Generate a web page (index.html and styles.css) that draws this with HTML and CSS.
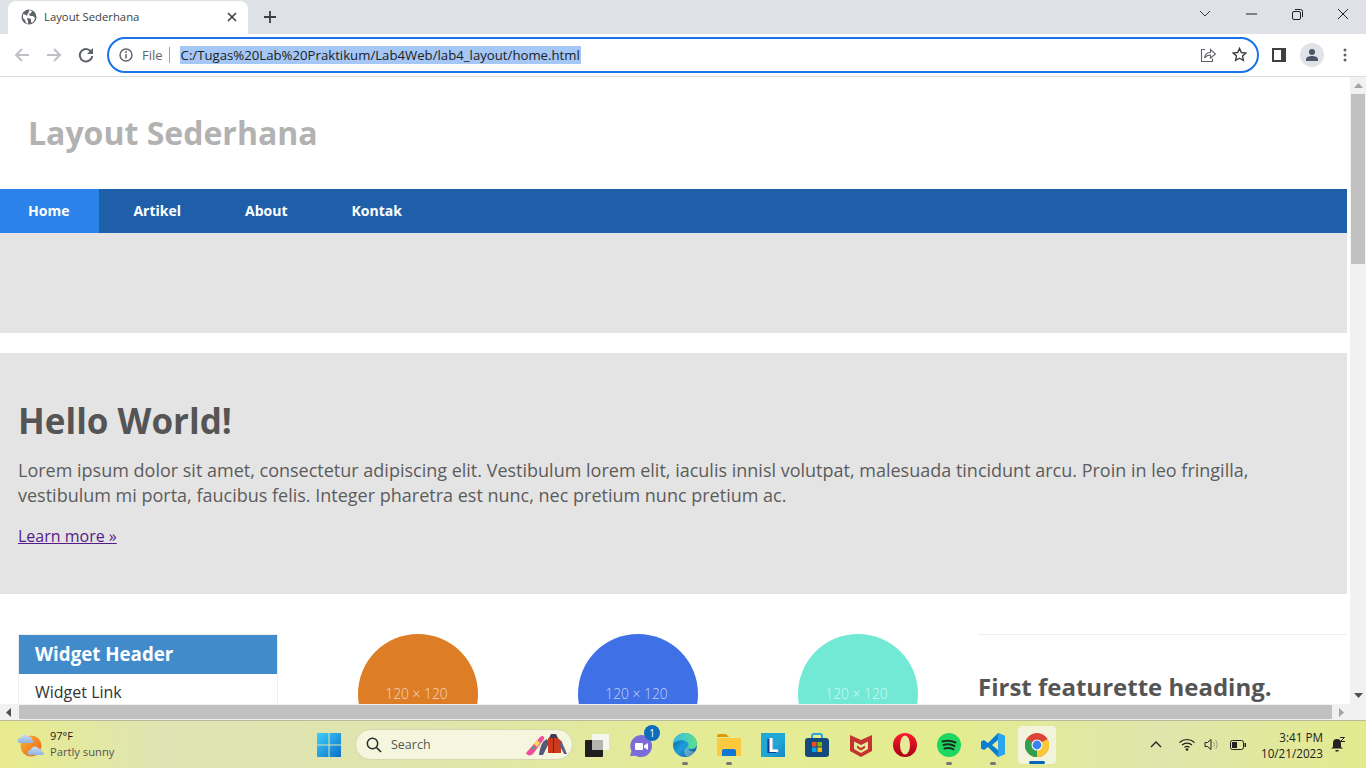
FILE: index.html
```html
<!DOCTYPE html>
<html lang="id">
<head>
<meta charset="utf-8">
<title>Layout Sederhana</title>
<link rel="stylesheet" href="styles.css">
</head>
<body>
<div class="tabstrip">
  <div class="tab">
    <svg class="favicon" width="16" height="16" viewBox="0 0 16 16"><circle cx="8" cy="8" r="7.500" fill="#5f6368"/><path d="M2 5l3 1 2 2-1 2 1 2v3l-2-1-1-3-2-2zM8 1l3 1-1 2-2 1 1 2 3 0 2 2-1 3-2 2-1-1 0-3-3-1-1-2 1-3 1-1z" fill="#fff"/></svg>
    <span class="tab-title">Layout Sederhana</span>
    <svg class="tab-close" width="10" height="10" viewBox="0 0 10 10"><path d="M1 1l8 8M9 1l-8 8" stroke="#3c4043" stroke-width="1.600"/></svg>
  </div>
  <svg class="newtab" width="14" height="14" viewBox="0 0 14 14"><path d="M7 1v12M1 7h12" stroke="#3c4043" stroke-width="1.800"/></svg>
  <div class="winctl">
    <span class="winbtn"><svg width="12" height="8" viewBox="0 0 12 8"><path d="M1 1l5 5 5-5" fill="none" stroke="#3c4043" stroke-width="1"/></svg></span>
    <span class="winbtn"><svg width="11" height="2" viewBox="0 0 11 2"><path d="M0 1h11" stroke="#202124" stroke-width="1"/></svg></span>
    <span class="winbtn"><svg width="11" height="11" viewBox="0 0 11 11"><rect x="0.500" y="2.500" width="8" height="8" rx="1.500" fill="none" stroke="#202124"/><path d="M3 .5h5.500a2 2 0 0 1 2 2V8" fill="none" stroke="#202124"/></svg></span>
    <span class="winbtn"><svg width="12" height="12" viewBox="0 0 12 12"><path d="M1 1l10 10M11 1L1 11" stroke="#202124" stroke-width="1"/></svg></span>
  </div>
</div>
<div class="toolbar">
  <span class="navbtn"><svg width="16" height="16" viewBox="0 0 16 16"><path d="M15 8H2M8 2L2 8l6 6" fill="none" stroke="#bdc1c6" stroke-width="2"/></svg></span>
  <span class="navbtn"><svg width="16" height="16" viewBox="0 0 16 16"><path d="M1 8h13M8 2l6 6-6 6" fill="none" stroke="#bdc1c6" stroke-width="2"/></svg></span>
  <span class="navbtn"><svg width="16" height="16" viewBox="0 0 16 16"><path d="M13.600 5.500A6.200 6.200 0 1 0 14.200 9" fill="none" stroke="#5f6368" stroke-width="2"/><path d="M15 1v6H9z" fill="#5f6368"/></svg></span>
  <div class="omnibox">
    <svg class="info" width="14" height="14" viewBox="0 0 14 14"><circle cx="7" cy="7" r="6" fill="none" stroke="#5f6368" stroke-width="1.400"/><path d="M7 6v4.500" stroke="#5f6368" stroke-width="1.500"/><circle cx="7" cy="4" r="1" fill="#5f6368"/></svg>
    <span class="scheme">File</span>
    <span class="divider"></span>
    <span class="url">C:/Tugas%20Lab%20Praktikum/Lab4Web/lab4_layout/home.html</span>
    <span class="omni-spacer"></span>
    <svg class="share" width="16" height="16" viewBox="0 0 16 16"><path d="M5 2.500H1.500v12h11V11.500" fill="none" stroke="#5f6368" stroke-width="1.100"/><path d="M4.500 11c.5-3.500 3-5.500 6-5.500V2.500l5 4.500-5 4V8c-2.500 0-4.500 1-6 3z" fill="none" stroke="#5f6368" stroke-width="1.100"/></svg>
    <svg class="star" width="15" height="15" viewBox="0 0 16 16"><path d="M8 1.500l2 4.400 4.800.5-3.600 3.200 1 4.700L8 12l-4.200 2.300 1-4.700L1.200 6.400 6 5.900z" fill="none" stroke="#3c4043" stroke-width="1.500"/></svg>
  </div>
  <svg class="panel" width="14" height="14" viewBox="0 0 14 14"><rect width="14" height="14" fill="#3c4043"/><rect x="2" y="2" width="7" height="10" fill="#fff"/></svg>
  <span class="avatar"><svg width="14" height="14" viewBox="0 0 14 14"><circle cx="7" cy="4" r="3" fill="#4a5568"/><path d="M1 13v-1.500c0-2.500 3-3.500 6-3.500s6 1 6 3.500V13z" fill="#4a5568"/></svg></span>
  <svg class="kebab" width="4" height="14" viewBox="0 0 4 14"><circle cx="2" cy="2" r="1.500" fill="#5f6368"/><circle cx="2" cy="7" r="1.500" fill="#5f6368"/><circle cx="2" cy="12" r="1.500" fill="#5f6368"/></svg>
</div>

<div class="viewport">
  <div class="page">
    <div class="page-inner">
      <header class="site-head"><h1 class="site-title">Layout Sederhana</h1></header>
      <nav class="site-nav">
        <a class="nav-item nav-active">Home</a>
        <a class="nav-item">Artikel</a>
        <a class="nav-item">About</a>
        <a class="nav-item">Kontak</a>
      </nav>
      <div class="banner"></div>
      <section class="hero">
        <h2 class="hero-title">Hello World!</h2>
        <p class="hero-text">Lorem ipsum dolor sit amet, consectetur adipiscing elit. Vestibulum lorem elit, iaculis innisl volutpat, malesuada tincidunt arcu. Proin in leo fringilla, vestibulum mi porta, faucibus felis. Integer pharetra est nunc, nec pretium nunc pretium ac.</p>
        <a class="hero-link">Learn more »</a>
      </section>
      <div class="content">
        <aside class="widget">
          <div class="widget-head">Widget Header</div>
          <div class="widget-link">Widget Link</div>
        </aside>
        <div class="thumb-col"><div class="thumb thumb-orange">120 × 120</div></div>
        <div class="thumb-col"><div class="thumb thumb-blue">120 × 120</div></div>
        <div class="thumb-col"><div class="thumb thumb-teal">120 × 120</div></div>
        <div class="feature"><h3 class="feature-title">First featurette heading.</h3></div>
      </div>
    </div>
  </div>
  <div class="vscroll">
    <svg class="sb-arrow" width="9" height="5" viewBox="0 0 9 5"><path d="M4.500 0L9 5H0z" fill="#a3a3a3"/></svg>
    <div class="vthumb"></div>
    <svg class="sb-arrow sb-end" width="9" height="5" viewBox="0 0 9 5"><path d="M0 0h9L4.500 5z" fill="#505050"/></svg>
  </div>
  <div class="hscroll">
    <svg class="sb-arrow-h" width="5" height="9" viewBox="0 0 5 9"><path d="M5 0v9L0 4.500z" fill="#505050"/></svg>
    <div class="hthumb"></div>
    <svg class="sb-arrow-h" width="5" height="9" viewBox="0 0 5 9"><path d="M0 0v9l5-4.500z" fill="#a3a3a3"/></svg>
  </div>
  <div class="corner"></div>
</div>

<footer class="taskbar">
  <div class="weather">
    <svg width="26" height="26" viewBox="0 0 26 26"><defs><linearGradient id="sun" x1="0" y1="0" x2="1" y2="1"><stop offset="0" stop-color="#f9b233"/><stop offset="1" stop-color="#e8631a"/></linearGradient><linearGradient id="cloud" x1="0" y1="0" x2="0" y2="1"><stop offset="0" stop-color="#c9dcf3"/><stop offset="1" stop-color="#8fb2de"/></linearGradient></defs><circle cx="13" cy="14" r="10.500" fill="url(#sun)"/><path d="M2 11a2.500 2.500 0 0 1 .5-5 4.500 4.500 0 0 1 8-1.500A3 3 0 0 1 14 8a1.500 1.500 0 0 1 0 3z" fill="url(#cloud)"/><path d="M12 23a2.500 2.500 0 0 1 .5-5 4.500 4.500 0 0 1 8-1.500A3 3 0 0 1 24 20a1.500 1.500 0 0 1 .5 3z" fill="url(#cloud)"/></svg>
    <div class="weather-text"><span class="temp">97°F</span><span class="cond">Partly sunny</span></div>
  </div>
  <div class="apps">
    <span class="app"><svg width="24" height="24" viewBox="0 0 24 24"><defs><linearGradient id="win" x1="0" y1="0" x2="1" y2="1"><stop offset="0" stop-color="#3fd0fb"/><stop offset="1" stop-color="#0a6fc8"/></linearGradient></defs><path d="M0 0h11.500v11.500H0zM12.500 0H24v11.500H12.500zM0 12.500h11.500V24H0zM12.500 12.500H24V24H12.500z" fill="url(#win)"/></svg></span>
    <div class="search">
      <svg width="16" height="16" viewBox="0 0 16 16"><circle cx="6.500" cy="6.500" r="5.200" fill="none" stroke="#2b2b2b" stroke-width="1.500"/><path d="M10.500 10.500L15 15" stroke="#2b2b2b" stroke-width="1.700"/></svg>
      <span class="search-label">Search</span>
      <svg class="search-art" width="42" height="24" viewBox="0 0 42 24"><path d="M0 20L14 4c2-2 5-1 4 2L7 21c-2 2-6 2-7-1z" fill="#ef4f9d"/><path d="M8 11l3 3 3-4-3-3z" fill="#f5e04a"/><path d="M5 15l2 2 2-2-2-2z" fill="#3ab36a"/><path d="M13 22c1-8 3-14 8-16l2 4-6 12z" fill="#555a7a"/><path d="M22 5h10l3 3v12H22z" fill="#cc3a1d"/><path d="M27 5h1v15h-1z" fill="#33364c"/><path d="M35 7l6 14h-3l-4-8z" fill="#5b6080"/><path d="M25 1h5l2 4H23z" fill="#3b3e55"/></svg>
    </div>
    <span class="app"><svg width="24" height="24" viewBox="0 0 24 24"><rect x="7" y="1" width="17" height="16" rx="1" fill="#f6f6f0"/><rect x="0" y="7" width="18" height="17" rx="1" fill="#1e1e1e"/><path d="M7 7h11v10H7z" fill="#b5b5ad"/></svg></span>
    <span class="app"><svg width="24" height="24" viewBox="0 0 24 24"><path d="M12 2a11 11 0 0 1 0 22c-2 0-4-.4-5.500-1.300L1 23l1.500-5A11 11 0 0 1 12 2z" fill="#7b6cd9"/><rect x="6" y="10" width="8" height="7" rx="1" fill="#fff"/><path d="M15 12.500l4-2.500v7l-4-2.500z" fill="#fff"/></svg><span class="badge">1</span></span>
    <span class="app app-open"><svg width="24" height="24" viewBox="0 0 24 24"><defs><linearGradient id="edge" x1="0" y1="0" x2="1" y2="1"><stop offset="0" stop-color="#0c59a4"/><stop offset=".5" stop-color="#1c9fd8"/><stop offset="1" stop-color="#114a8b"/></linearGradient><linearGradient id="edge2" x1="0" y1="0" x2="1" y2="0"><stop offset="0" stop-color="#33bde8"/><stop offset="1" stop-color="#5de08a"/></linearGradient></defs><circle cx="12" cy="12" r="12" fill="url(#edge)"/><path d="M0 11C1 4 6 0 12 0c7 0 12 5 12 11 0 3-3 5-6 5-2 0-4-1-4-2 2-1 2-4 0-5-4-3-11-2-14 2z" fill="url(#edge2)"/><path d="M14 14c-3 2-4 6-1 9 4 1 9-1 10-5-2 1-7 1-9-4z" fill="#dff3e8" opacity=".35"/></svg></span>
    <span class="app app-open"><svg width="24" height="22" viewBox="0 0 24 22"><path d="M0 2a2 2 0 0 1 2-2h7l3 3H0z" fill="#d99b00"/><path d="M0 4h24v18H0z" fill="#ffc83d"/><path d="M7 15h10a2 2 0 0 1 2 2v5H5v-5a2 2 0 0 1 2-2z" fill="#0f78d4"/></svg></span>
    <span class="app"><span class="lapp">L</span></span>
    <span class="app"><svg width="24" height="24" viewBox="0 0 24 24"><path d="M7 6V3a2 2 0 0 1 2-2h6a2 2 0 0 1 2 2v3" fill="none" stroke="#2aa7dc" stroke-width="2"/><rect y="5" width="24" height="19" rx="3" fill="#174a7c"/><rect x="7" y="9" width="4.500" height="4.500" fill="#f25022"/><rect x="12.500" y="9" width="4.500" height="4.500" fill="#7fba00"/><rect x="7" y="14.500" width="4.500" height="4.500" fill="#00a4ef"/><rect x="12.500" y="14.500" width="4.500" height="4.500" fill="#ffb900"/></svg></span>
    <span class="app"><svg width="22" height="24" viewBox="0 0 22 24"><path d="M0 2l11 5 11-5v16l-11 6-11-6z" fill="#c4332f"/><path d="M4 8.500l7 3.500 7-3.500v7.500l-7 4-7-4z" fill="#e6eb9c"/><path d="M7 12.500l4 2.500 4-2.500v2.500l-4 2.500-4-2.500z" fill="#c4332f"/></svg></span>
    <span class="app"><svg width="24" height="24" viewBox="0 0 24 24"><defs><linearGradient id="op" x1="0" y1="0" x2="0" y2="1"><stop offset="0" stop-color="#ff1b2d"/><stop offset="1" stop-color="#a70014"/></linearGradient></defs><circle cx="12" cy="12" r="12" fill="url(#op)"/><ellipse cx="12" cy="12" rx="5" ry="9.500" fill="#e5eb9a"/></svg></span>
    <span class="app app-open"><svg width="24" height="24" viewBox="0 0 24 24"><circle cx="12" cy="12" r="12" fill="#1ed760"/><path d="M5.500 8.500c4-1.200 9-1 13 1M6.500 12c3.500-1 7.500-.8 11 1M7.500 15.500c3-.8 6-.6 9 .8" fill="none" stroke="#193020" stroke-width="2" stroke-linecap="round"/></svg></span>
    <span class="app app-open"><svg width="24" height="24" viewBox="0 0 24 24"><path d="M17 0l7 3v18l-7 3L7 14l-4 3-3-1.500V8.500L3 7l4 3zM17 7l-6 5 6 5z" fill="#0a7fd0"/><path d="M17 0l7 3v18l-7 3z" fill="#2aa5ee"/></svg></span>
    <span class="app app-active"><svg width="24" height="24" viewBox="0 0 24 24"><circle cx="12" cy="12" r="12" fill="#db4437"/><path d="M12 12L22.400 6A12 12 0 0 1 12 24z" fill="#fcc934"/><path d="M12 12L12 24A12 12 0 0 1 1.600 6z" fill="#2f9e4f"/><circle cx="12" cy="12" r="5.500" fill="#fff"/><circle cx="12" cy="12" r="4.400" fill="#3b82f0"/></svg></span>
  </div>
  <div class="tray">
    <svg width="12" height="7" viewBox="0 0 12 7"><path d="M1 6l5-5 5 5" fill="none" stroke="#222" stroke-width="1.300"/></svg>
    <svg class="wifi" width="16" height="13" viewBox="0 0 16 13"><path d="M.5 4.500a11 11 0 0 1 15 0M3 7a7.500 7.500 0 0 1 10 0M5.500 9.500a3.700 3.700 0 0 1 5 0" fill="none" stroke="#222" stroke-width="1.100"/><circle cx="8" cy="11.500" r="1.300" fill="#222"/></svg>
    <svg class="vol" width="16" height="13" viewBox="0 0 16 13"><path d="M1 4.500h2.500L7 1.500v10L3.500 8.500H1z" fill="none" stroke="#222"/><path d="M9.500 4a4 4 0 0 1 0 5M11.500 2a7 7 0 0 1 0 9" fill="none" stroke="#9a9a8a"/></svg>
    <svg class="batt" width="16" height="10" viewBox="0 0 16 10"><rect x=".5" y=".5" width="13" height="9" rx="2" fill="none" stroke="#222"/><rect x="2" y="2" width="5" height="6" fill="#222"/><rect x="14.500" y="3" width="1.500" height="4" fill="#222"/></svg>
    <div class="clock"><span>3:41 PM</span><span>10/21/2023</span></div>
    <svg class="bell" width="14" height="15" viewBox="0 0 14 15"><path d="M6 2a4 4 0 0 1 4 4v4l2 1.500H0L2 10V6a4 4 0 0 1 4-4z" fill="#222"/><path d="M4.500 13h3v1.500h-3z" fill="#222"/><path d="M9 .5h4.500L9.500 4.500H14" fill="none" stroke="#222"/></svg>
  </div>
</footer>
</body>
</html>
```
FILE: styles.css
```css
* { box-sizing: border-box; }
html, body { margin: 0; padding: 0; }
body {
  width: 1366px;
  height: 768px;
  overflow: hidden;
  display: flex;
  flex-direction: column;
  font-family: "Open Sans", "Liberation Sans", sans-serif;
  background: #fff;
}

/* browser chrome */
.tabstrip {
  height: 34px;
  background: #dee1e6;
  display: flex;
  align-items: flex-end;
  padding-left: 8px;
  flex: none;
}
.tab {
  width: 240px;
  height: 33px;
  background: #fff;
  border-radius: 8px 8px 0 0;
  display: flex;
  align-items: center;
  padding: 0 11px 1px 13px;
}
.tab-title { font-size: 11.300px; line-height: 14px; color: #3c4043; margin-left: 7px; flex: 1; white-space: nowrap; }
.tab-close { flex: none; }
.newtab { margin: 0 0 10px 15px; }
.winctl { margin-left: auto; display: flex; align-self: stretch; }
.winbtn { width: 46px; display: flex; align-items: center; justify-content: center; padding-bottom: 6px; }
.toolbar {
  height: 43px;
  background: #fff;
  border-bottom: 1px solid #dadce0;
  display: flex;
  align-items: center;
  padding: 0 0 1px 6px;
  flex: none;
}
.navbtn { width: 32px; display: flex; justify-content: center; }
.omnibox {
  width: 1152px;
  height: 36px;
  margin-left: 5px;
  border: 2px solid #1a73e8;
  border-radius: 18px;
  display: flex;
  align-items: center;
  padding: 0 10px 0 10px;
}
.scheme { font-size: 13px; color: #5f6368; margin-left: 9px; }
.divider { width: 1px; height: 16px; background: #9aa0a6; margin: 0 10px 0 6px; }
.url {
  font-size: 13.200px;
  line-height: 18px;
  color: #202124;
  background: #a5c7f5;
  padding: 0 1px;
  white-space: nowrap;
}
.omni-spacer { flex: 1; }
.star { margin-left: 16px; }
.panel { margin-left: 13px; }
.avatar {
  width: 24px; height: 24px; margin-left: 14px;
  border-radius: 50%;
  background: #e1e3e8;
  display: flex; align-items: center; justify-content: center;
}
.kebab { margin-left: 19px; }

/* viewport with scrollbars */
.viewport {
  height: 643px;
  flex: none;
  display: grid;
  grid-template-columns: 1350px 16px;
  grid-template-rows: 627px 16px;
}
.page { overflow: hidden; background: #fff; }
.page-inner { width: 1347px; }
.vscroll, .hscroll, .corner { background: #f1f1f1; }
.vscroll { display: flex; flex-direction: column; align-items: center; padding: 6px 0; }
.sb-end { margin-top: auto; }
.vthumb { width: 14px; height: 170px; background: #c1c1c1; margin-top: 6px; }
.hscroll { display: flex; align-items: center; padding: 0 6px; }
.hthumb { width: 1313px; height: 14px; background: #c1c1c1; margin: 0 7px 0 8px; flex: none; }

/* page */
.site-head { height: 112px; display: flex; align-items: center; padding: 0 0 2px 28px; }
.site-title { margin: 0; font-size: 32px; font-weight: 700; color: #b2b2b2; }
.site-nav { height: 44px; background: #1f5faa; display: flex; }
.nav-item {
  display: flex; align-items: center;
  padding: 0 29px 2px; margin-right: 6px;
  color: #fff; font-size: 14px; font-weight: 700;
}
.nav-active { background: #2b83ea; padding-left: 28px; padding-right: 30px; margin-right: 5px; }
.banner { height: 100px; background: #e4e4e4; margin-bottom: 20px; }
.hero { height: 241px; background: #e4e4e4; padding: 46px 18px 0; color: #555; }
.hero-title { margin: 0; font-size: 35px; line-height: 44px; font-weight: 700; }
.hero-text { margin: 15px 0 16px; font-size: 18px; line-height: 25px; color: #5c5c5c; }
.hero-link { font-size: 16px; line-height: 25px; color: #551a8b; text-decoration: underline; }
.content { display: flex; align-items: flex-start; padding: 40px 0 0 18px; }
.widget { width: 260px; margin-right: 30px; border: 1px solid #eee; border-bottom: 0; flex: none; }
.widget-head {
  height: 39px; background: #428bca; color: #fff;
  font-size: 18.720px; font-weight: 700; line-height: 37px; padding-left: 16px;
}
.widget-link { padding: 6px 16px; font-size: 16px; line-height: 24px; color: #333; }
.thumb-col { width: 220px; display: flex; justify-content: center; flex: none; }
.thumb {
  width: 120px; height: 120px; border-radius: 50%;
  display: flex; align-items: center; justify-content: center;
  padding: 0 3px 2px 0;
  color: rgba(255,255,255,.7); font-size: 13.800px; font-weight: 300;
}
.thumb-orange { background: #dd7d25; }
.thumb-blue { background: #4070e5; }
.thumb-teal { background: #72e9d5; }
.feature { flex: 1; margin-left: 10px; border-top: 1px solid #eee; padding-top: 34px; color: #555; }
.feature-title { margin: 0; font-size: 24px; line-height: 36px; font-weight: 700; }

/* taskbar */
.taskbar {
  height: 48px;
  flex: none;
  display: flex;
  align-items: center;
  border-top: 1px solid #b9bc9c;
  background: linear-gradient(90deg, #e8ec8c 0%, #dfe4b4 12%, #dfe5ad 30%, #e4eb96 50%, #e4ec90 70%, #dfe6ac 85%, #e4ea8e 100%);
  color: #222;
}
.weather { width: 307px; flex: none; display: flex; align-items: center; padding-left: 18px; }
.weather-text { display: flex; flex-direction: column; margin-left: 6px; }
.temp { font-size: 11px; line-height: 15px; color: #1b1b1b; padding-bottom: 1px; margin-top: -1px; }
.cond { font-size: 11.200px; line-height: 16px; color: #555; }
.apps { display: flex; align-items: center; flex: none; }
.app {
  width: 44px; height: 38px;
  display: flex; align-items: center; justify-content: center;
  position: relative;
}
.app-open::after {
  content: ""; position: absolute; left: 19px; bottom: -1px;
  width: 6px; height: 3px; border-radius: 2px; background: #777;
}
.app-active { background: #f1f3da; border-radius: 4px; width: 38px; margin: 0 3px; }
.app-active::after {
  content: ""; position: absolute; left: 11px; bottom: 0;
  width: 16px; height: 3px; border-radius: 2px; background: #0067c0;
}
.badge {
  position: absolute; top: -1px; right: 3px;
  width: 16px; height: 16px; border-radius: 50%;
  background: #0f6cbd; color: #fff;
  font-size: 10px; line-height: 16px; text-align: center;
}
.lapp {
  width: 24px; height: 24px;
  background: linear-gradient(135deg, #1fa7d8 55%, #1b84c4);
  color: #fff; text-shadow: -2px 1px 0 #123a8a;
  font-weight: 700; font-size: 19px; line-height: 24px; text-align: center;
}
.search {
  width: 218px; height: 31px; margin: 0 2px 0 4px;
  background: #f4f7dd;
  border: 1px solid #d5d9ad;
  border-radius: 16px;
  display: flex; align-items: center;
  padding: 0 4px 0 10px;
}
.search-label { font-size: 12.500px; color: #555; margin-left: 9px; }
.search-art { margin-left: auto; }
.tray { flex: 1; display: flex; align-items: center; padding-left: 91px; }
.wifi { margin-left: 17px; }
.vol { margin-left: 9px; }
.batt { margin-left: 10px; }
.clock {
  width: 77px; display: flex; flex-direction: column; align-items: flex-end;
  font-size: 11.700px; line-height: 16px; color: #222;
}
.bell { margin-left: 8px; }
```
